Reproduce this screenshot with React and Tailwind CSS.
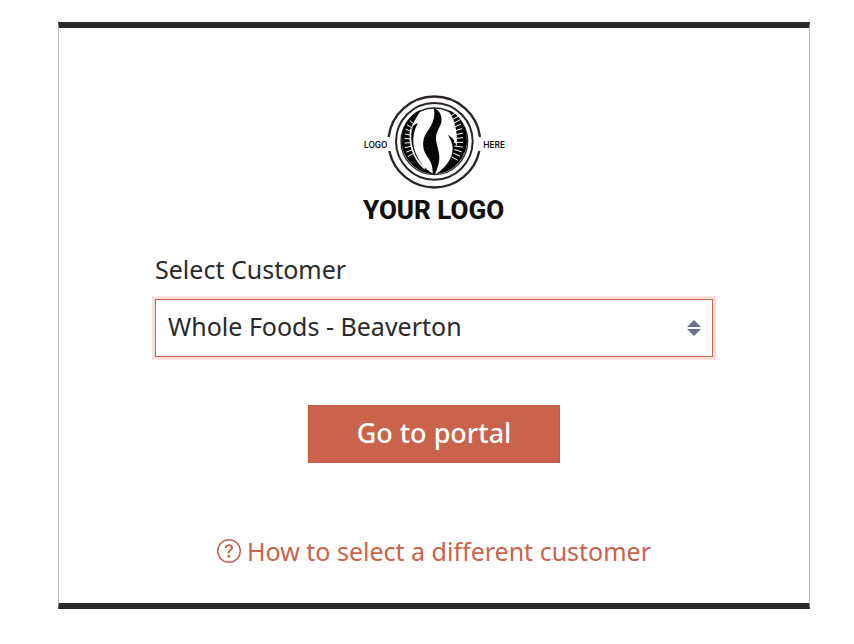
import React, { useState } from 'react';

const customers = ['Whole Foods - Beaverton', 'Whole Foods - Portland', 'Whole Foods - Tigard'];

function Logo() {
  return (
    <svg viewBox="0 0 510 435" className="w-[170px] h-[145px]" role="img" aria-label="Your Logo">
      <g fill="none" stroke="#2a2522">
        <path d="M119 159A138 138 0 0 1 393 159" strokeWidth="7" />
        <path d="M121 201A138 138 0 0 0 391 201" strokeWidth="7" />
        <circle cx="256" cy="172" r="115" strokeWidth="6" />
        <circle cx="256" cy="172" r="100" strokeWidth="4" />
      </g>
      {/* left side of the bean */}
      <path
        d="M214 78C180 92 158 128 158 172C158 222 203 270 253 270C222 252 201 222 195 190C190 164 194 140 207 118C197 120 191 126 186 136C191 114 207 98 214 78Z"
        fill="#090706"
      />
      {/* right side of the bean */}
      <path
        d="M299 78C336 94 354 132 354 172C353 222 312 268 261 270C292 250 311 222 311 192C310 176 304 163 296 152C311 160 320 172 323 188C326 160 321 130 314 110C309 98 303 90 299 78Z"
        fill="#090706"
      />
      {/* centre crease */}
      <path
        d="M254 72C272 78 281 96 277 115C273 131 262 142 261 160C260 180 271 197 271 221C271 240 264 253 259 270L251 270C252 245 245 231 233 215C219 195 219 166 232 147C246 128 262 102 254 72Z"
        fill="#090706"
      />
      <g stroke="#fff" strokeLinecap="round" fill="none">
        <path
          strokeWidth="3"
          d="M196 121L183 110M190 132L175 123M186 143L171 136M184 154L169 150M183 165L168 163M183 176L168 177M185 187L169 191M188 198L173 204M192 209L178 217"
        />
        <path
          strokeWidth="3"
          d="M304 98L316 89M306 109L326 98M309 120L332 108M312 131L335 121M314 142L338 134M315 153L340 148M316 164L341 161M316 175L341 175M317 186L340 189M317 197L337 203M314 208L332 216M309 219L325 228"
        />
        <path d="M186 136C179 174 191 222 226 252" strokeWidth="5" />
        <path d="M302 100C313 122 318 145 318 170" strokeWidth="6" />
      </g>
      <g fill="#12100e">
        <text x="45" y="192" className="font-['Inter'] font-semibold text-[25px]">LOGO</text>
        <text x="403" y="192" className="font-['Inter'] font-semibold text-[25px]">HERE</text>
        <text x="254" y="405" textAnchor="middle" className="font-['Roboto'] font-extrabold text-[78px]">
          YOUR LOGO
        </text>
      </g>
    </svg>
  );
}

function CustomerSelect({ value, onChange }) {
  return (
    <div className="w-full">
      <label htmlFor="customer" className="block text-[25px] leading-9 mb-3">
        Select Customer
      </label>
      <div className="relative">
        <select
          id="customer"
          value={value}
          onChange={(e) => onChange(e.target.value)}
          className="block w-full h-[58px] appearance-none rounded-none border border-[#c9634b] bg-white pl-3 pr-10 pb-[2px] text-[25px] outline-none ring-3 ring-[#f4dfd9]"
        >
          {customers.map((name) => (
            <option key={name}>{name}</option>
          ))}
        </select>
        <svg
          viewBox="0 0 14 16"
          className="pointer-events-none absolute right-3 top-1/2 h-4 w-[14px] -translate-y-1/2"
          fill="#68718d"
          aria-hidden="true"
        >
          <path d="M7 0L14 7H0Z" />
          <path d="M0 9H14L7 16Z" />
        </svg>
      </div>
    </div>
  );
}

function App() {
  const [customer, setCustomer] = useState(customers[0]);

  return (
    <main className="pt-[22px] pl-[58px] pr-11 font-['Noto_Sans',sans-serif] text-[#29292b]">
      <form
        onSubmit={(e) => e.preventDefault()}
        className="flex flex-col items-center border-x border-y-6 border-x-[#bcbcbc] border-y-[#29292b] px-24 pt-14 pb-[34px]"
      >
        <Logo />
        <div className="mt-[22px] w-full">
          <CustomerSelect value={customer} onChange={setCustomer} />
        </div>
        <button
          type="submit"
          className="mt-12 h-[58px] border border-[#c65a40] bg-[#c9634b] px-12 pb-[2px] text-[27px] leading-9 font-medium text-white"
        >
          Go to portal
        </button>
        <a href="#help" className="mt-[70px] flex items-center gap-[6px] text-[25px] leading-9 whitespace-nowrap text-[#c9634b]">
          <svg viewBox="0 0 16 16" className="h-6 w-6" fill="currentColor" aria-hidden="true">
            <path d="M8 15A7 7 0 1 1 8 1a7 7 0 0 1 0 14m0 1A8 8 0 1 0 8 0a8 8 0 0 0 0 16" />
            <path d="M5.255 5.786a.237.237 0 0 0 .241.247h.825c.138 0 .248-.113.266-.25.09-.656.54-1.134 1.342-1.134.686 0 1.314.343 1.314 1.168 0 .635-.374.927-.965 1.371-.673.489-1.206 1.06-1.168 1.987l.003.217a.25.25 0 0 0 .25.246h.811a.25.25 0 0 0 .25-.25v-.105c0-.718.273-.927 1.01-1.486.609-.463 1.244-.977 1.244-2.056 0-1.511-1.276-2.241-2.673-2.241-1.267 0-2.655.59-2.75 2.286m1.557 5.763c0 .533.425.927 1.01.927.609 0 1.028-.394 1.028-.927 0-.552-.42-.94-1.029-.94-.584 0-1.009.388-1.009.94" />
          </svg>
          How to select a different customer
        </a>
      </form>
    </main>
  );
}

export default App;
